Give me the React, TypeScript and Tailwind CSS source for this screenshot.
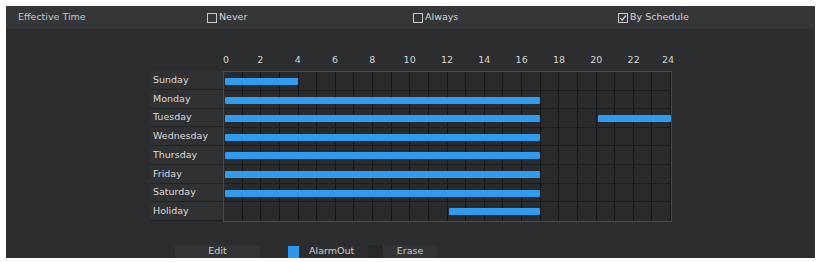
import React from "react";

const days = [
  { name: "Sunday", bars: [[0, 4]] },
  { name: "Monday", bars: [[0, 17]] },
  { name: "Tuesday", bars: [[0, 17], [20, 24]] },
  { name: "Wednesday", bars: [[0, 17]] },
  { name: "Thursday", bars: [[0, 17]] },
  { name: "Friday", bars: [[0, 17]] },
  { name: "Saturday", bars: [[0, 17]] },
  { name: "Holiday", bars: [[12, 17]] },
];

const hours = Array.from({ length: 13 }, (_, i) => i * 2);

function Box({ checked }: { checked?: boolean }) {
  return (
    <span className="inline-flex w-[10px] h-[10px] border border-[#c9c9c9] items-center justify-center mr-[2px]">
      {checked && (
        <svg width="8" height="8" viewBox="0 0 8 8">
          <path d="M1 4 L3.2 6.2 L7 1.5" stroke="#d8d8d8" strokeWidth="1.2" fill="none" />
        </svg>
      )}
    </span>
  );
}

export default function App() {
  return (
    <div className="w-[821px] h-[262px] bg-white pt-[6px] pl-[6px]" style={{ fontFamily: '"DejaVu Sans", sans-serif' }}>
      <div className="w-[809px] h-[252px] bg-[#2b2d2f] flex flex-col text-[9.5px] text-[#d4d4d4]">
        {/* header */}
        <div className="h-[23px] bg-[#343638] flex items-center">
          <span className="w-[201px] pl-[12px] text-[#c4c4c4]">Effective Time</span>
          <span className="w-[206px] flex items-center"><Box />Never</span>
          <span className="w-[205px] flex items-center"><Box />Always</span>
          <span className="flex items-center"><Box checked />By Schedule</span>
        </div>
        {/* hours */}
        <div className="mt-[25px] h-[12px] flex">
          <div className="w-[217px]" />
          <div className="w-[448px] relative">
            {hours.map((h) => (
              <span
                key={h}
                className="absolute top-0 w-[20px] text-center -translate-x-1/2 leading-[12px]"
                style={{ left: `${(h / 24) * 448 + (h === 0 ? 3 : h === 24 ? -3 : 0)}px` }}
              >
                {h}
              </span>
            ))}
          </div>
        </div>
        {/* grid */}
        <div className="mt-[5px] flex">
          <div className="w-[144px]" />
          <div className="w-[73px] flex flex-col">
            {days.map((d) => (
              <div key={d.name} className="h-[18.75px] bg-[#2f3133] border-b border-[#222324] flex items-center pl-[3px] text-[#dcdcdc]">
                {d.name}
              </div>
            ))}
          </div>
          <div className="w-[449px] border border-[#3d4c57] flex flex-col bg-[#292a2b]">
            {days.map((d) => (
              <div key={d.name} className="h-[18.6px] flex relative border-b border-[#1b1c1d] last:border-b-0">
                {Array.from({ length: 24 }, (_, i) => (
                  <div key={i} className="flex-1 border-r border-[#161718] last:border-r-0" />
                ))}
                {d.bars.map(([a, b], i) => (
                  <div
                    key={i}
                    className="absolute top-[6px] h-[7px] bg-[#2f9cf0] rounded-[1px]"
                    style={{ left: `${(a / 24) * 448 + 1}px`, width: `${((b - a) / 24) * 448 - 2}px` }}
                  />
                ))}
              </div>
            ))}
          </div>
        </div>
        {/* bottom */}
        <div className="mt-auto h-[13px] flex items-center">
          <div className="w-[169px]" />
          <div className="w-[85px] h-[13px] bg-[#323436] flex items-center justify-center text-[#cfcfcf]">Edit</div>
          <div className="w-[28px]" />
          <div className="w-[11px] h-[12px] bg-[#2a98ec]" />
          <span className="ml-[10px] w-[58px] text-[#cfcfcf]">AlarmOut</span>
          <div className="w-[16px] h-[13px] bg-[#26282a]" />
          <div className="w-[54px] h-[13px] bg-[#313335] flex items-center justify-center text-[#cfcfcf]">Erase</div>
        </div>
      </div>
    </div>
  );
}
